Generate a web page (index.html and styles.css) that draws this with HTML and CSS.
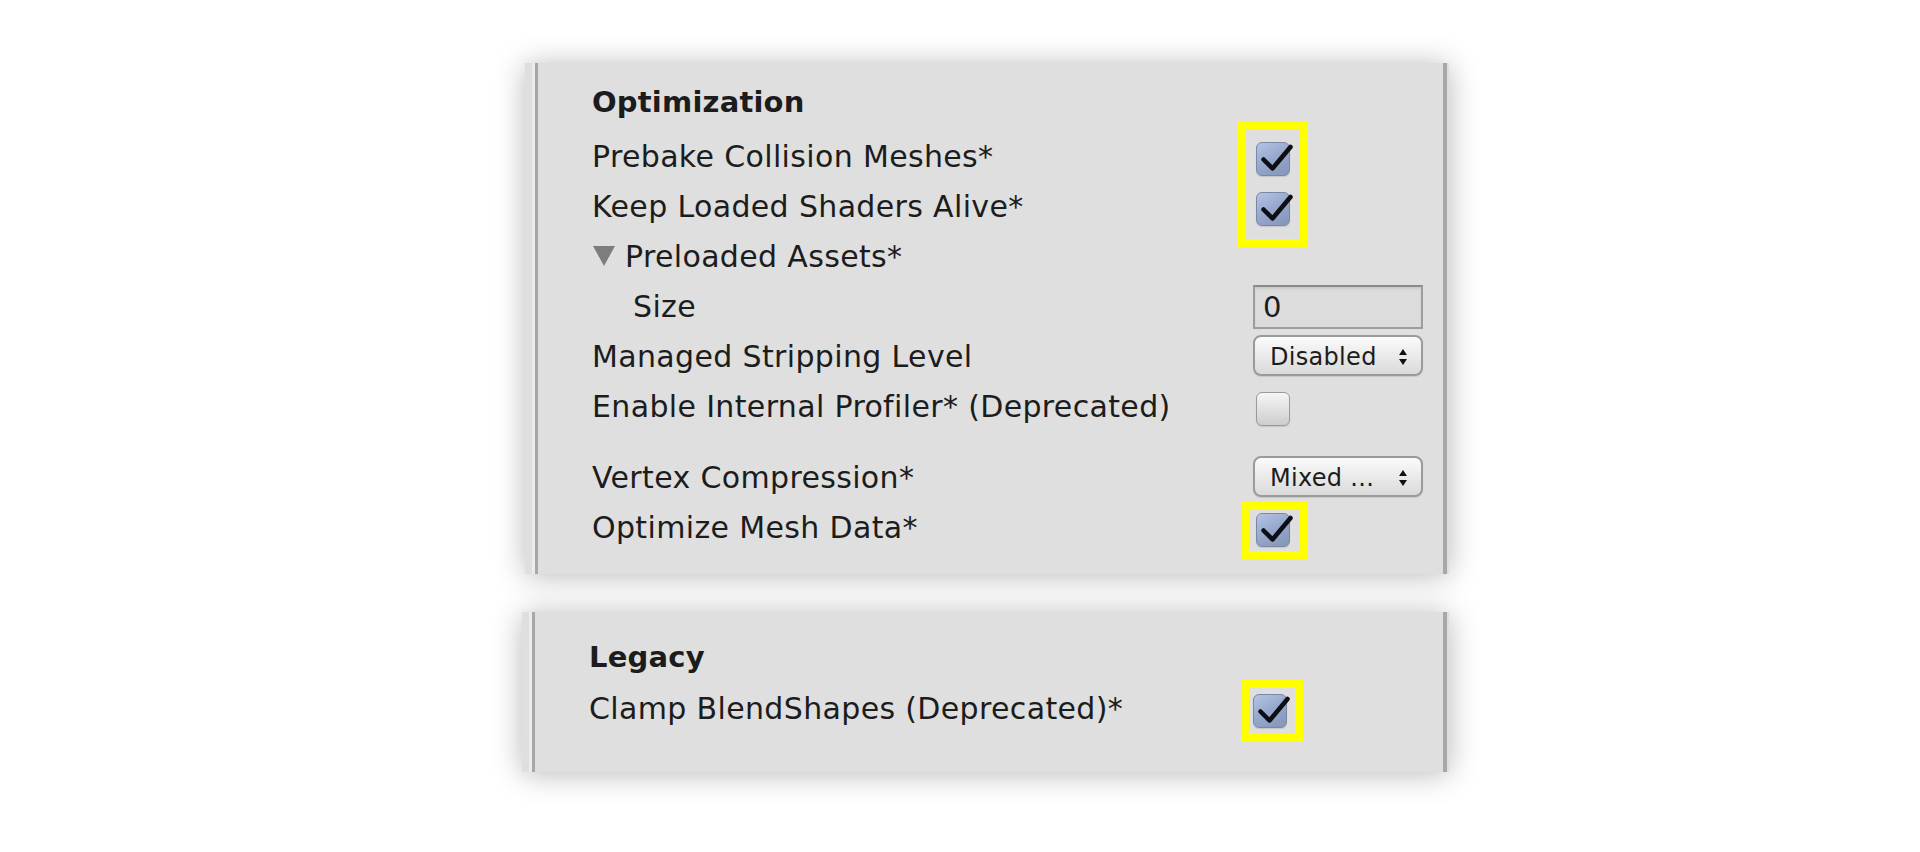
FILE: index.html
```html
<!DOCTYPE html>
<html>
<head>
<meta charset="utf-8">
<link rel="stylesheet" href="styles.css">
</head>
<body>
<div class="page">
  <section class="panel panel-opt">
    <div class="inner">
      <div class="header">Optimization</div>
      <div class="row"><span class="label">Prebake Collision Meshes*</span><span class="control"><span class="cb checked"><svg viewBox="0 0 34 34"><path d="M7.5 17.5 L16.5 26.5 L34.5 5"/></svg></span></span></div>
      <div class="row"><span class="label">Keep Loaded Shaders Alive*</span><span class="control"><span class="cb checked"><svg viewBox="0 0 34 34"><path d="M7.5 17.5 L16.5 26.5 L34.5 5"/></svg></span></span></div>
      <div class="row"><span class="label foldout"><svg class="tri" viewBox="0 0 22 20"><polygon points="0,0 22,0 11,20"/></svg>Preloaded Assets*</span><span class="control"></span></div>
      <div class="row"><span class="label indent">Size</span><span class="control"><span class="field">0</span></span></div>
      <div class="row"><span class="label">Managed Stripping Level</span><span class="control"><span class="popup">Disabled<svg class="arrows" viewBox="0 0 8 16"><polygon points="4,0 8,6 0,6"/><polygon points="0,10 8,10 4,16"/></svg></span></span></div>
      <div class="row"><span class="label">Enable Internal Profiler* (Deprecated)</span><span class="control"><span class="cb"></span></span></div>
      <div class="row spaced"><span class="label">Vertex Compression*</span><span class="control"><span class="popup">Mixed ...<svg class="arrows" viewBox="0 0 8 16"><polygon points="4,0 8,6 0,6"/><polygon points="0,10 8,10 4,16"/></svg></span></span></div>
      <div class="row"><span class="label">Optimize Mesh Data*</span><span class="control"><span class="cb checked"><svg viewBox="0 0 34 34"><path d="M7.5 17.5 L16.5 26.5 L34.5 5"/></svg></span></span></div>
    </div>
    <div class="highlight hl-1"></div>
    <div class="highlight hl-2"></div>
  </section>
  <section class="panel panel-legacy">
    <div class="inner">
      <div class="header">Legacy</div>
      <div class="row"><span class="label">Clamp BlendShapes (Deprecated)*</span><span class="control"><span class="cb checked"><svg viewBox="0 0 34 34"><path d="M7.5 17.5 L16.5 26.5 L34.5 5"/></svg></span></span></div>
    </div>
    <div class="highlight hl-3"></div>
  </section>
</div>
</body>
</html>
```

FILE: styles.css
```css
html, body {
  margin: 0;
  padding: 0;
  background: #ffffff;
}
body {
  width: 1920px;
  height: 852px;
  overflow: hidden;
  font-family: "DejaVu Sans", "Liberation Sans", sans-serif;
  color: #1c1c1c;
}
.page {
  padding-top: 63px;
  padding-left: 525px;
  display: flex;
  flex-direction: column;
  gap: 38px;
}
.panel {
  position: relative;
  width: 924px;
  background: #dfdfdf;
  box-shadow: 0 2px 28px rgba(0, 0, 0, 0.28);
  display: flex;
}
.panel-legacy {
  margin-left: -3px;
  width: 927px;
}
.inner {
  flex: 1;
  margin-left: 10px;
  margin-right: 2px;
  border-left: 3px solid #a7a7a7;
  border-right: 4px solid #a7a7a7;
  box-shadow: -3px 0 0 #ececec;
  padding-left: 54px;
  padding-top: 14px;
  padding-bottom: 21px;
}
.panel-legacy .inner {
  padding-top: 20px;
  padding-bottom: 38px;
}
.header {
  font-weight: bold;
  font-size: 29px;
  letter-spacing: 0.2px;
  line-height: 50px;
  height: 55px;
}
.panel-legacy .header {
  height: 52px;
}
.row {
  display: flex;
  height: 50px;
  font-size: 30px;
  letter-spacing: 0.35px;
  line-height: 50px;
}
.row.spaced {
  margin-top: 21px;
}
.label {
  flex: 0 0 661px;
  white-space: nowrap;
}
.foldout {
  display: flex;
  align-items: center;
  gap: 10px;
}
.tri {
  width: 22px;
  height: 20px;
  fill: #7d7d7d;
  margin-left: 1px;
  margin-bottom: 2px;
}
.indent {
  padding-left: 41px;
  flex-basis: 620px;
}
.control {
  display: flex;
  align-items: flex-start;
  letter-spacing: 0;
}
.cb {
  box-sizing: border-box;
  width: 34px;
  height: 34px;
  margin-top: 10px;
  margin-left: 3px;
  border-radius: 6px;
  border: 1.5px solid #9a9a9a;
  background: linear-gradient(#f6f6f6, #cdcdcd);
  box-shadow: 0 1px 1px rgba(0, 0, 0, 0.12);
  position: relative;
}
.cb.checked {
  border-color: #7a88a4;
  background: linear-gradient(150deg, #b4c5e6 0%, #95a7cb 50%, #8495b7 100%);
}
.cb svg {
  position: absolute;
  left: -1.5px;
  top: -1.5px;
  width: 34px;
  height: 34px;
  overflow: visible;
  fill: none;
  stroke: #0d0d14;
  stroke-width: 4.5;
  stroke-linecap: round;
  stroke-linejoin: round;
}
.field {
  box-sizing: border-box;
  width: 170px;
  height: 44px;
  margin-top: 3px;
  border: 2px solid #9d9d9d;
  border-top-color: #8a8a8a;
  background: #dcdcdc;
  box-shadow: inset 0 2px 2px rgba(0, 0, 0, 0.08);
  padding-left: 8px;
  font-size: 29px;
  line-height: 40px;
}
.popup {
  box-sizing: border-box;
  width: 170px;
  height: 41px;
  margin-top: 3px;
  border: 2px solid #9a9a9a;
  border-radius: 8px;
  background: linear-gradient(#fbfbfb, #dadada);
  box-shadow: 0 1px 1px rgba(0, 0, 0, 0.1);
  padding-left: 15px;
  padding-right: 14px;
  font-size: 24px;
  letter-spacing: 0.3px;
  line-height: 37px;
  padding-top: 3px;
  display: flex;
  align-items: center;
  justify-content: space-between;
}
.arrows {
  width: 8px;
  height: 16px;
  fill: #111111;
}
.highlight {
  position: absolute;
  box-sizing: border-box;
  border: 8px solid #ffff00;
  pointer-events: none;
}
.hl-1 {
  left: 713px;
  top: 58px;
  width: 70px;
  height: 126px;
}
.hl-2 {
  left: 716px;
  top: 439px;
  width: 67px;
  height: 57px;
}
.hl-3 {
  left: 719px;
  top: 68px;
  width: 62px;
  height: 62px;
}
```
